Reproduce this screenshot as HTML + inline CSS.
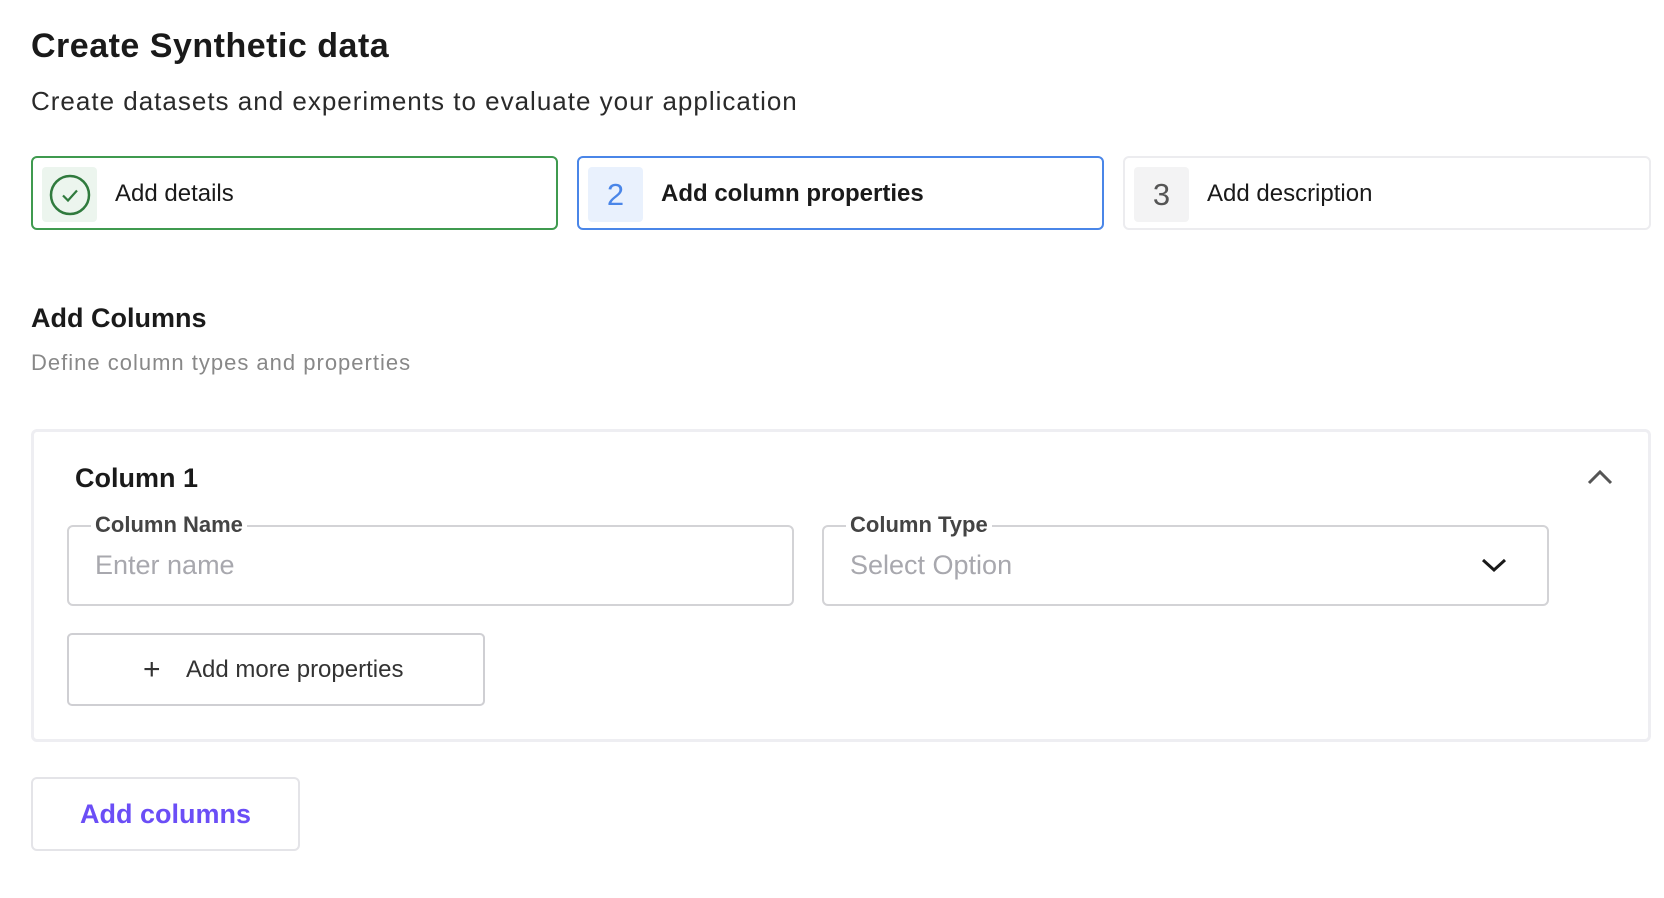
<!DOCTYPE html>
<html><head><meta charset="utf-8"><style>
*{box-sizing:border-box;margin:0;padding:0}
body{width:1664px;height:898px;background:#fff;font-family:"Liberation Sans",sans-serif;color:#1a1a1a;position:relative;overflow:hidden}
.a{position:absolute;white-space:nowrap}
.step{position:absolute;top:156px;height:74px;width:528px;border-radius:6px;background:#fff}
.sq{position:absolute;left:9px;top:9px;width:55px;height:55px;border-radius:4px;display:flex;align-items:center;justify-content:center;font-size:31px}
.st{position:absolute;left:82px;top:0;line-height:72px;font-size:24px}
.inp{position:absolute;top:525px;height:81px;width:727px;border:2px solid #d3d3d6;border-radius:6px}
.lab{position:absolute;top:-16px;left:22px;background:#fff;padding:0 4px;font-size:22px;font-weight:bold;color:#444;line-height:28px}
.ph{position:absolute;left:26px;top:0;line-height:77px;font-size:27px;color:#a8a8ae}
</style></head><body>
<div class="a" style="left:31px;top:24px;font-size:34px;font-weight:bold;line-height:44px;letter-spacing:0.5px">Create Synthetic data</div>
<div class="a" style="left:31px;top:84px;font-size:26px;line-height:34px;color:#2a2a2a;letter-spacing:1px">Create datasets and experiments to evaluate your application</div>

<div class="step" style="left:31px;width:527px;border:2px solid #3f9a4f">
 <div class="sq" style="background:#ecf5ee"><svg width="44" height="44" viewBox="0 0 44 44"><circle cx="22" cy="22" r="19" fill="none" stroke="#2f7a3d" stroke-width="2.5"/><path d="M15 22.5l5 5 9-10" fill="none" stroke="#2f7a3d" stroke-width="2.2"/></svg></div>
 <div class="st">Add details</div>
</div>
<div class="step" style="left:577px;width:527px;border:2px solid #4a86e8">
 <div class="sq" style="background:#e9f1fd;color:#4a86e8">2</div>
 <div class="st" style="font-weight:bold">Add column properties</div>
</div>
<div class="step" style="left:1123px;width:528px;border:2px solid #ececef">
 <div class="sq" style="background:#f3f3f4;color:#555">3</div>
 <div class="st">Add description</div>
</div>

<div class="a" style="left:31px;top:301px;font-size:27px;font-weight:bold;line-height:34px">Add Columns</div>
<div class="a" style="left:31px;top:349px;font-size:22px;color:#888;line-height:28px;letter-spacing:1px">Define column types and properties</div>

<div class="a" style="left:31px;top:429px;width:1620px;height:313px;border:3px solid #eeeef2;border-radius:6px"></div>
<div class="a" style="left:75px;top:461px;font-size:27px;font-weight:bold;line-height:34px">Column 1</div>
<svg class="a" style="left:1586px;top:468px" width="28" height="18" viewBox="0 0 28 18"><path d="M3 15L14 4l11 11" fill="none" stroke="#555" stroke-width="3"/></svg>

<div class="inp" style="left:67px"><div class="lab">Column Name</div><div class="ph">Enter name</div></div>
<div class="inp" style="left:822px"><div class="lab">Column Type</div><div class="ph">Select Option</div>
<svg style="position:absolute;right:40px;top:30px" width="26" height="16" viewBox="0 0 26 16"><path d="M2 3l11 10 11-10" fill="none" stroke="#1a1a1a" stroke-width="3"/></svg></div>

<div class="a" style="left:67px;top:633px;width:418px;height:73px;border:2px solid #cfcfd3;border-radius:5px">
 <div class="a" style="left:74px;top:0;line-height:69px;font-size:30px;color:#333">+</div>
 <div class="a" style="left:117px;top:0;line-height:69px;font-size:24px;color:#333">Add more properties</div>
</div>

<div class="a" style="left:31px;top:777px;width:269px;height:74px;border:2px solid #e4e4e8;border-radius:6px;text-align:center;line-height:70px;font-size:27px;font-weight:bold;color:#6b4ef6">Add columns</div>
</body></html>
